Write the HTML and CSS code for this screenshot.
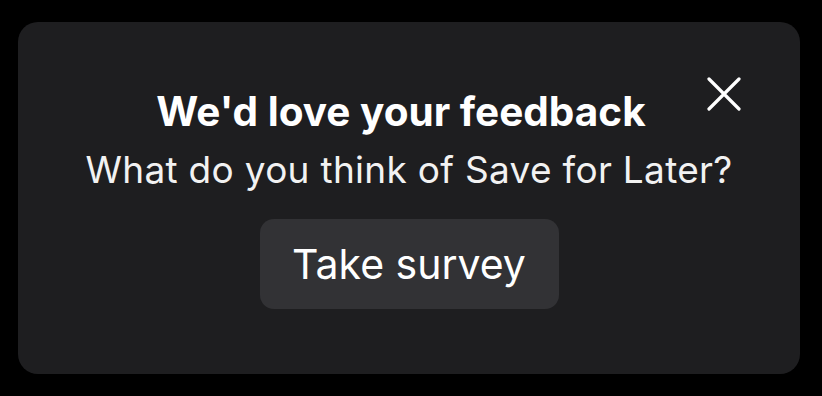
FILE: index.html
```html
<!DOCTYPE html>
<html lang="en">
<head>
    <meta charset="UTF-8">
    <meta name="viewport" content="width=device-width, initial-scale=1.0">
    <title>Feedback</title>
    <link rel="stylesheet" href="styles.css">
</head>
<body>
    <div class="feedback-card">
        <button class="close-btn" aria-label="Close">
            <svg width="34" height="34" viewBox="0 0 34 34">
                <path d="M2 2 L32 32 M32 2 L2 32" stroke="#fff" stroke-width="3.2" stroke-linecap="round" fill="none"/>
            </svg>
        </button>
        <h1 class="title">We'd love your feedback</h1>
        <p class="subtitle">What do you think of Save for Later?</p>
        <button class="survey-btn">Take survey</button>
    </div>
</body>
</html>
```

FILE: styles.css
```css
* {
    margin: 0;
    padding: 0;
    box-sizing: border-box;
    font-family: Inter, 'Liberation Sans', sans-serif;
}

body {
    background-color: #000;
    padding: 22px 22px 22px 18px;
    width: 822px;
    height: 396px;
}

.feedback-card {
    position: relative;
    width: 782px;
    height: 352px;
    background-color: #1e1e20;
    border-radius: 20px;
    display: flex;
    flex-direction: column;
    align-items: center;
    padding-top: 66px;
    color: #fff;
}

.close-btn {
    position: absolute;
    top: 55px;
    right: 59px;
    width: 34px;
    height: 34px;
    background: none;
    border: none;
    cursor: pointer;
}

.close-btn svg {
    display: block;
}

.title {
    font-size: 40.5px;
    font-weight: 700;
    line-height: 48px;
    padding-right: 16px;
}

.subtitle {
    margin-top: 10px;
    font-size: 37px;
    letter-spacing: 0.3px;
    line-height: 48px;
    color: #f2f2f2;
}

.survey-btn {
    margin-top: 25px;
    width: 299px;
    height: 90px;
    background-color: #323235;
    color: #fff;
    border: none;
    border-radius: 14px;
    font-size: 41px;
    cursor: pointer;
}
```
